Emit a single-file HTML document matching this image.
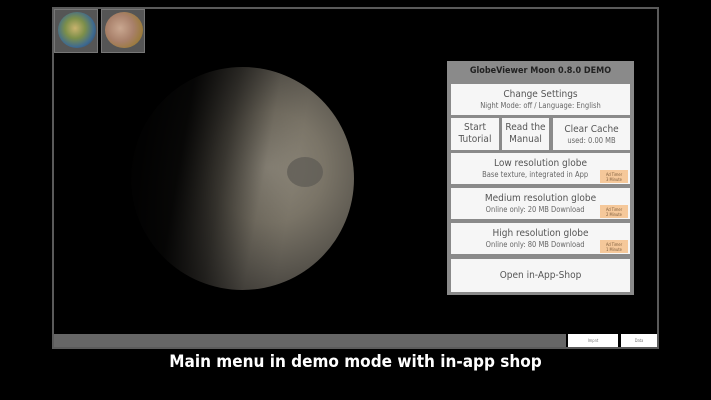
<!DOCTYPE html>
<html><head><style>
*{margin:0;padding:0;box-sizing:border-box}
body{width:711px;height:400px;background:#000;position:relative;overflow:hidden;font-family:"DejaVu Sans Condensed","DejaVu Sans","Liberation Sans",sans-serif}
.abs{position:absolute}
.frame{left:52px;top:7px;width:607px;height:342px;border:2px solid #5a5a5a;background:#000}
.moon{left:131px;top:67px;width:223px;height:223px;border-radius:50%;
background:linear-gradient(100deg,rgba(0,0,0,1) 0%,rgba(0,0,0,.92) 25%,rgba(0,0,0,.55) 42%,rgba(0,0,0,.1) 58%,rgba(0,0,0,0) 70%),radial-gradient(circle at 62% 45%,#8f897c 0%,#7a7467 30%,#5a564e 55%,#3a3733 80%,#222 100%)}
.mare{border-radius:50%}
.panel{left:447px;top:61px;width:187px;height:234px;background:#8a8a8a}
.b{position:absolute;background:#f6f6f6;text-align:center;color:#555;font-size:10px;line-height:12px}
.b .s{font-size:7.5px;color:#666;line-height:10px}
.ad{position:absolute;right:2px;background:#f5c89a;font-size:4px;line-height:5px;color:#7a5a3a;width:28px;height:13px;padding-top:2px}
.thumb{top:9px;width:44px;height:44px;background:#555;border:1px solid #777}
</style></head><body>
<div class="abs frame"></div>
<div class="abs thumb" style="left:54px"><div style="position:absolute;left:3px;top:2px;width:38px;height:36px;border-radius:50%;background:radial-gradient(circle at 45% 45%,#c9b36e 0%,#7c8f4a 35%,#3f6a8f 65%,#1f3657 100%)"></div></div>
<div class="abs thumb" style="left:101px"><div style="position:absolute;left:3px;top:2px;width:38px;height:36px;border-radius:50%;background:radial-gradient(circle at 40% 45%,#c9a790 0%,#a8806a 45%,#9a7a3a 75%,#3a2a1a 100%)"></div></div>
<div class="abs moon"></div>
<div class="abs mare" style="left:287px;top:157px;width:36px;height:30px;background:rgba(95,92,86,.75)"></div>
<div class="abs" style="left:54px;top:334px;width:512px;height:13px;background:#666"></div>
<div class="abs" style="left:568px;top:334px;width:50px;height:13px;background:#fff;font-size:4px;color:#777;text-align:center;line-height:13px">Impnt</div>
<div class="abs" style="left:621px;top:334px;width:36px;height:13px;background:#fff;font-size:4px;color:#777;text-align:center;line-height:13px">Data</div>
<div class="abs panel">
<div style="position:absolute;left:0;top:5px;width:187px;text-align:center;font-size:9px;font-weight:bold;color:#222">GlobeViewer Moon 0.8.0 DEMO</div>
<div class="b" style="left:4px;top:23px;width:179px;height:31px;padding-top:5px">Change Settings<div class="s">Night Mode: off / Language: English</div></div>
<div class="b" style="left:4px;top:57px;width:48px;height:32px;padding-top:4px">Start<br>Tutorial</div>
<div class="b" style="left:55px;top:57px;width:47px;height:32px;padding-top:4px">Read the<br>Manual</div>
<div class="b" style="left:106px;top:57px;width:77px;height:32px;padding-top:6px">Clear Cache<div class="s">used: 0.00 MB</div></div>
<div class="b" style="left:4px;top:92px;width:179px;height:31px;padding-top:5px">Low resolution globe<div class="s">Base texture, integrated in App&nbsp;&nbsp;&nbsp;&nbsp;&nbsp;</div><div class="ad" style="top:17px">Ad Timer<br>3 Minute</div></div>
<div class="b" style="left:4px;top:127px;width:179px;height:31px;padding-top:5px">Medium resolution globe<div class="s">Online only: 20 MB Download&nbsp;&nbsp;&nbsp;&nbsp;&nbsp;</div><div class="ad" style="top:17px">Ad Timer<br>2 Minute</div></div>
<div class="b" style="left:4px;top:162px;width:179px;height:31px;padding-top:5px">High resolution globe<div class="s">Online only: 80 MB Download&nbsp;&nbsp;&nbsp;&nbsp;&nbsp;</div><div class="ad" style="top:17px">Ad Timer<br>1 Minute</div></div>
<div class="b" style="left:4px;top:198px;width:179px;height:33px;line-height:33px">Open in-App-Shop</div>
</div>
<div class="abs" style="left:0;top:352px;width:711px;text-align:center;color:#fff;font-weight:bold;font-size:17px;font-family:'DejaVu Sans Condensed','DejaVu Sans',sans-serif">Main menu in demo mode with in-app shop</div>
</body></html>
